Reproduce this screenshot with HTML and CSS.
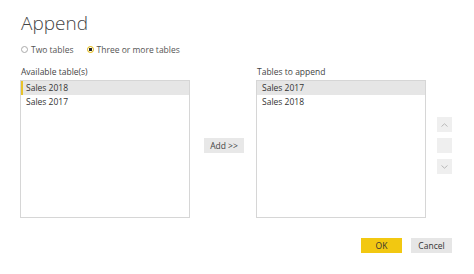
FILE: index.html
```html
<!DOCTYPE html>
<html>
<head>
<meta charset="utf-8">
<link rel="stylesheet" href="styles.css">
</head>
<body>
<div class="dialog">
  <h1 class="title">Append</h1>
  <div class="radios">
    <label class="radio"><span class="dot"></span>Two tables</label>
    <label class="radio checked"><span class="dot"></span>Three or more tables</label>
  </div>
  <div class="main">
    <div class="col">
      <div class="label">Available table(s)</div>
      <div class="list">
        <div class="item sel focus">Sales 2018</div>
        <div class="item">Sales 2017</div>
      </div>
    </div>
    <div class="mid">
      <button class="btn add">Add &gt;&gt;</button>
    </div>
    <div class="col">
      <div class="label">Tables to append</div>
      <div class="list">
        <div class="item sel">Sales 2017</div>
        <div class="item">Sales 2018</div>
      </div>
    </div>
    <div class="side">
      <button class="sbtn"><svg width="7" height="4" viewBox="0 0 7 4"><path d="M0.5 3.5 L3.5 0.8 L6.5 3.5" fill="none" stroke="#b8b8b8" stroke-width="1"/></svg></button>
      <button class="sbtn"></button>
      <button class="sbtn"><svg width="7" height="4" viewBox="0 0 7 4"><path d="M0.5 0.5 L3.5 3.2 L6.5 0.5" fill="none" stroke="#b8b8b8" stroke-width="1"/></svg></button>
    </div>
  </div>
  <div class="footer">
    <button class="btn ok">OK</button>
    <button class="btn cancel">Cancel</button>
  </div>
</div>
</body>
</html>
```
FILE: styles.css
```css
html, body {
  margin: 0;
  padding: 0;
  background: #fff;
}
body {
  width: 474px;
  height: 274px;
  overflow: hidden;
  font-family: "Open Sans", "Noto Sans", sans-serif;
  font-size: 8.5px;
  color: #333;
}
.dialog {
  padding: 10px 22px 0 20px;
}
.title {
  margin: 0;
  font-weight: 300;
  font-size: 19px;
  line-height: 26px;
  color: #444;
  padding-left: 1px;
}
.radios {
  display: flex;
  gap: 13px;
  margin-top: 7px;
  height: 12px;
  align-items: center;
  padding-left: 1px;
}
.radio {
  display: flex;
  align-items: center;
  gap: 3px;
  color: #555;
}
.dot {
  width: 5px;
  height: 5px;
  border: 1px solid #aaa;
  border-radius: 50%;
  box-sizing: content-box;
  background: #fff;
}
.checked .dot {
  border-color: #e0b400;
  background: radial-gradient(circle, #222 0 1.4px, #fff 1.8px);
}
.main {
  display: flex;
  margin-top: 12px;
}
.col {
  display: flex;
  flex-direction: column;
}
.label {
  height: 10px;
  line-height: 10px;
  padding-left: 1px;
  color: #444;
}
.list {
  margin-top: 3px;
  width: 168px;
  height: 136px;
  border: 1px solid #d6d6d6;
  box-sizing: content-box;
}
.item {
  height: 14px;
  line-height: 14px;
  padding-left: 5px;
  color: #333;
}
.item.sel {
  background: #e6e6e6;
}
.item.focus {
  box-shadow: inset 2px 0 0 #e8c32a;
}
.mid {
  width: 66px;
  display: flex;
  justify-content: center;
  align-items: flex-start;
  padding-top: 71px;
  box-sizing: border-box;
}
.btn {
  font: inherit;
  border: none;
  padding: 0;
  cursor: default;
}
.add {
  width: 40px;
  height: 15px;
  background: #e8e8e8;
  color: #444;
  margin-left: 2px;
}
.side {
  display: flex;
  flex-direction: column;
  gap: 6px;
  margin-left: 11px;
  padding-top: 50px;
}
.sbtn {
  width: 15px;
  height: 15px;
  border: none;
  padding: 0;
  background: #efefef;
  display: flex;
  align-items: center;
  justify-content: center;
}
.footer {
  display: flex;
  justify-content: flex-end;
  gap: 9px;
  margin-top: 20px;
}
.ok {
  width: 41px;
  height: 15px;
  background: #f2c811;
  color: #333;
}
.cancel {
  width: 41px;
  height: 15px;
  background: #e6e6e6;
  color: #333;
}
```
